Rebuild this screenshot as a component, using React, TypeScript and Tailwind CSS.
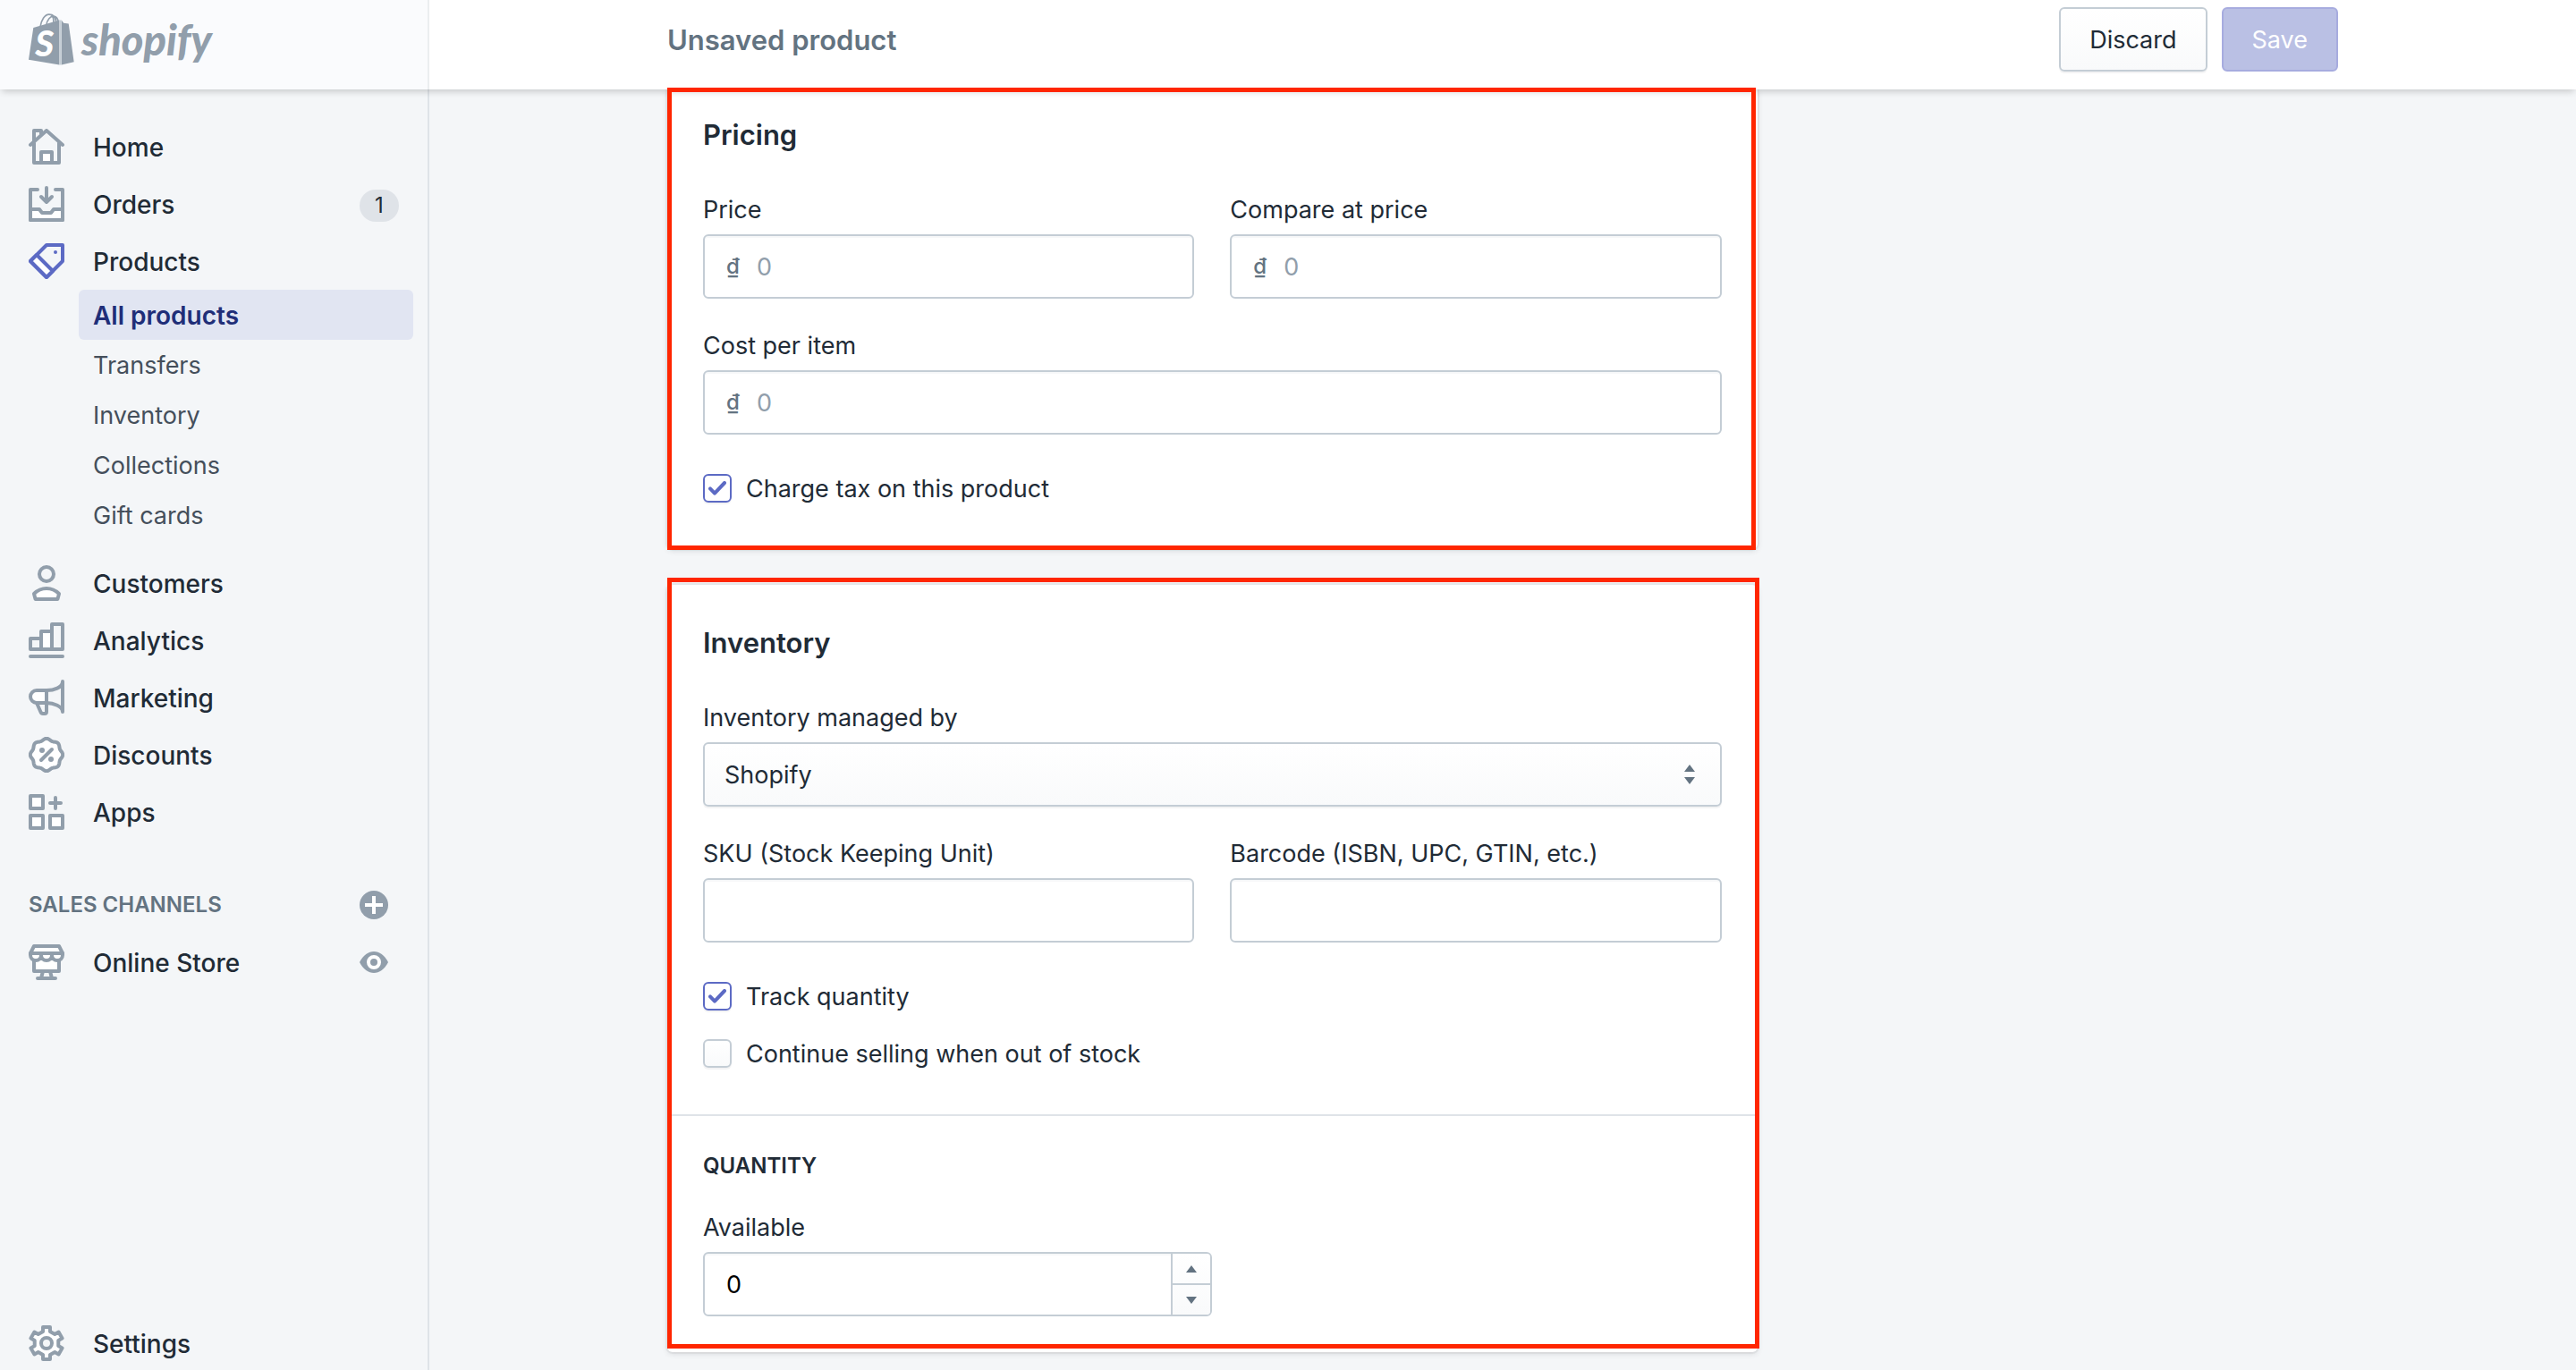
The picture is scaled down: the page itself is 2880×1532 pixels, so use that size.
import { useState } from "react";
import type { ReactNode } from "react";

type NavItem = {
    label: string;
    icon: ReactNode;
    badge?: number;
};

// Points on a circle around the middle of a 20x20 icon
const polar = (radius: number, degrees: number) => {
    const angle = (degrees * Math.PI) / 180;
    return `${(10 + radius * Math.sin(angle)).toFixed(2)},${(10 - radius * Math.cos(angle)).toFixed(2)}`;
};

const scallopPoints = Array.from({ length: 120 }, (_, i) =>
    polar(8.6 + 0.5 * Math.cos((8 * i * 3 * Math.PI) / 180), i * 3),
).join(" ");

const gearPoints = [0, 60, 120, 180, 240, 300]
    .flatMap((turn) => [
        polar(6.8, turn - 17),
        polar(9.2, turn - 12.5),
        polar(9.2, turn + 12.5),
        polar(6.8, turn + 17),
    ])
    .join(" ");

const NavIcon = ({
    children,
    active = false,
}: {
    children: ReactNode;
    active?: boolean;
}) => (
    <svg
        viewBox="0 0 20 20"
        fill="none"
        stroke="currentColor"
        strokeWidth={2}
        strokeLinecap="round"
        strokeLinejoin="round"
        aria-hidden="true"
        className={
            active
                ? "size-10 shrink-0 text-[#5c6ac4]"
                : "size-10 shrink-0 text-[#919eab]"
        }
    >
        {children}
    </svg>
);

const HomeIcon = () => (
    <NavIcon>
        <path d="M3 7V1h4v2M1 9l9-8 9 8M3 8v11h14V8" />
        <path d="M7 19v-6h6v6z" fill="#fff" />
    </NavIcon>
);

const OrdersIcon = () => (
    <NavIcon>
        <path d="M1 13h5l1.5 2h5l1.5-2h5v6H1z" fill="#fff" />
        <path d="M5 2H1v17M15 2h4v17M10 1v8M7 6l3 3 3-3" />
    </NavIcon>
);

const ProductsIcon = () => (
    <NavIcon active>
        <path d="M10 1h9v9l-9 9-9-9z" />
        <path d="M4.5 6.5l9 9L10 19l-9-9z" fill="#fff" />
        <circle cx="15" cy="5" r="1" fill="currentColor" stroke="none" />
    </NavIcon>
);

const CustomersIcon = () => (
    <NavIcon>
        <circle cx="10" cy="5" r="4" />
        <path d="M3 16c2-2 4.5-3 7-3s5 1 7 3l-.8 3H3.8z" fill="#fff" />
    </NavIcon>
);

const AnalyticsIcon = () => (
    <NavIcon>
        <path d="M1 9h6v6H1zM13 1h6v14h-6zM1 19h18" />
        <path d="M7 5h6v10H7z" fill="#fff" />
    </NavIcon>
);

const MarketingIcon = () => (
    <NavIcon>
        <path d="M4.5 13l2.2 5q.4 1 1.3 1h1q1 0 1-1v-5" />
        <path d="M10 6H4.5a3.5 3.5 0 0 0 0 7H10z" fill="#fff" />
        <path d="M10 6c4 0 9-1.5 9-5v17c0-3-5-5-9-5" />
    </NavIcon>
);

const DiscountsIcon = () => (
    <NavIcon>
        <polygon points={scallopPoints} fill="#fff" />
        <path d="M7 13l6-6" />
        <circle cx="7.5" cy="7.5" r="1.5" fill="currentColor" stroke="none" />
        <circle cx="12.5" cy="12.5" r="1.5" fill="currentColor" stroke="none" />
    </NavIcon>
);

const AppsIcon = () => (
    <NavIcon>
        <path d="M1 1h7v7H1zM1 12h7v7H1zM12 12h7v7h-7z" fill="#fff" />
        <path d="M12 5h6M15 2v6" />
    </NavIcon>
);

const StoreIcon = () => (
    <NavIcon>
        <path d="M3 8v7h14V8z" fill="#fff" />
        <path d="M8 15l-1 4M12 15l1 4M5 19h10" />
        <path d="M3 1h14l2 4v1a3 3 0 0 1-6 0 3 3 0 0 1-6 0 3 3 0 0 1-6 0V5z" fill="#fff" />
        <path d="M1 5h18" />
    </NavIcon>
);

const SettingsIcon = () => (
    <NavIcon>
        <polygon points={gearPoints} fill="#fff" />
        <circle cx="10" cy="10" r="3" fill="#f4f6f8" />
    </NavIcon>
);

const Logo = () => (
    <a href="#" className="flex items-center gap-2 text-[#919eab]">
        <svg
            viewBox="96 42 154 174"
            fill="none"
            stroke="currentColor"
            strokeWidth={5}
            aria-hidden="true"
            className="h-[58px] w-[51px]"
        >
            <path d="M135 88c4-26 16-43 30-43s22 8 24 26M155 84c3-22 15-34 26-33 9 1 14 8 15 20M172 46c8 6 9 14 8 26" />
            <path
                d="M112 90l88-26v151L96 198zM207 64l7 10 17 2 18 129-42 10z"
                fill="currentColor"
                stroke="none"
            />
            <path d="M200 64h7v151h-7z" fill="#c4cdd5" stroke="none" />
            <text
                x="118"
                y="185"
                fontSize="122"
                fill="#fff"
                stroke="none"
                className="font-['Lato'] font-black italic"
            >
                S
            </text>
        </svg>
        <span className="font-['Lato'] text-[47px] leading-[58px] font-black italic">
            shopify
        </span>
    </a>
);

const primaryNav: NavItem[] = [
    { label: "Home", icon: <HomeIcon /> },
    { label: "Orders", icon: <OrdersIcon />, badge: 1 },
    { label: "Products", icon: <ProductsIcon /> },
];

const productLinks = [
    "All products",
    "Transfers",
    "Inventory",
    "Collections",
    "Gift cards",
];

const secondaryNav: NavItem[] = [
    { label: "Customers", icon: <CustomersIcon /> },
    { label: "Analytics", icon: <AnalyticsIcon /> },
    { label: "Marketing", icon: <MarketingIcon /> },
    { label: "Discounts", icon: <DiscountsIcon /> },
    { label: "Apps", icon: <AppsIcon /> },
];

const NavLink = ({ item }: { item: NavItem }) => (
    <a
        href="#"
        className="flex h-16 items-center gap-8 pr-8 pl-8 text-[28px] font-medium"
    >
        {item.icon}
        <span className="grow pt-0.5">{item.label}</span>
        {item.badge && (
            <span className="mt-1 flex h-9 w-11 items-center justify-center rounded-full bg-[#dfe3e8] text-2xl font-normal">
                {item.badge}
            </span>
        )}
    </a>
);

const Sidebar = () => (
    <aside className="flex w-[480px] shrink-0 flex-col border-r-2 border-[#dfe3e8] pt-8">
        <nav className="flex grow flex-col">
            {primaryNav.map((item) => (
                <NavLink key={item.label} item={item} />
            ))}
            <div className="mb-4 flex flex-col pr-4 pl-22">
                {productLinks.map((label, i) => (
                    <a
                        key={label}
                        href="#"
                        className={
                            i === 0
                                ? "flex h-14 items-center rounded-md bg-[#e1e5f2] px-4 pt-0.5 text-[28px] font-semibold text-[#202e78]"
                                : "flex h-14 items-center px-4 pt-0.5 text-[#454f5b]"
                        }
                    >
                        {label}
                    </a>
                ))}
            </div>
            {secondaryNav.map((item) => (
                <NavLink key={item.label} item={item} />
            ))}
            <div className="mt-10 flex h-16 items-center justify-between pr-11 pl-8">
                <h2 className="text-2xl font-semibold text-[#637381]">
                    SALES CHANNELS
                </h2>
                <button type="button" aria-label="Add sales channel">
                    <svg viewBox="0 0 16 16" className="size-8" aria-hidden="true">
                        <circle cx="8" cy="8" r="8" fill="#919eab" />
                        <path d="M8 3v10M3 8h10" stroke="#fff" strokeWidth={2} />
                    </svg>
                </button>
            </div>
            <div className="flex items-center justify-between pr-11">
                <NavLink item={{ label: "Online Store", icon: <StoreIcon /> }} />
                <button type="button" aria-label="View your online store">
                    <svg viewBox="0 0 16 12" className="h-6 w-8" aria-hidden="true">
                        <path
                            d="M0 6c2-4 5-6 8-6s6 2 8 6c-2 4-5 6-8 6S2 10 0 6z"
                            fill="#919eab"
                        />
                        <circle cx="8" cy="6" r="3" fill="#919eab" stroke="#fff" strokeWidth={2} />
                    </svg>
                </button>
            </div>
            <div className="mt-auto flex h-15 flex-col justify-center">
                <NavLink item={{ label: "Settings", icon: <SettingsIcon /> }} />
            </div>
        </nav>
    </aside>
);

const inputStyle =
    "h-18 w-full rounded-md border-2 border-[#c4cdd5] bg-white shadow-[inset_0_2px_0_rgba(99,115,129,0.05)]";

const Field = ({
    id,
    label,
    children,
}: {
    id: string;
    label: string;
    children: ReactNode;
}) => (
    <div className="flex min-w-0 flex-1 flex-col gap-1.5">
        <label htmlFor={id} className="leading-[42px]">
            {label}
        </label>
        {children}
    </div>
);

const MoneyField = ({ id, label }: { id: string; label: string }) => (
    <Field id={id} label={label}>
        <div className="relative">
            <span className="absolute inset-y-0 left-[26px] flex items-center text-2xl font-medium text-[#637381]">
                ₫
            </span>
            <input
                id={id}
                type="text"
                placeholder="0"
                className={`${inputStyle} pr-6 pl-[58px] placeholder:text-[#919eab]`}
            />
        </div>
    </Field>
);

const TextField = ({ id, label }: { id: string; label: string }) => (
    <Field id={id} label={label}>
        <input id={id} type="text" className={`${inputStyle} px-6`} />
    </Field>
);

const Checkbox = ({
    id,
    label,
    initial = false,
}: {
    id: string;
    label: string;
    initial?: boolean;
}) => {
    const [checked, setChecked] = useState(initial);

    return (
        <div className="flex h-14 items-center gap-4">
            <span className="relative flex size-8">
                <input
                    id={id}
                    type="checkbox"
                    checked={checked}
                    onChange={(e) => setChecked(e.target.checked)}
                    className="size-8 appearance-none rounded-md border-2 border-[#c4cdd5] bg-linear-to-b from-white to-[#f9fafb] shadow-[0_2px_0_rgba(22,29,37,0.05)] checked:border-[#5c6ac4] checked:from-white checked:to-white"
                />
                {checked && (
                    <svg
                        viewBox="0 0 10 8"
                        fill="none"
                        stroke="#5c6ac4"
                        strokeWidth={2}
                        strokeLinecap="round"
                        strokeLinejoin="round"
                        aria-hidden="true"
                        className="pointer-events-none absolute inset-0 m-auto h-4 w-5"
                    >
                        <path d="M1 4.2l2.5 2.6L9 1" />
                    </svg>
                )}
            </span>
            <label htmlFor={id} className="pt-0.5">
                {label}
            </label>
        </div>
    );
};

const ArrowUp = () => (
    <svg viewBox="0 0 12 8" fill="#637381" aria-hidden="true" className="h-2 w-3">
        <path d="M0 8l6-8 6 8z" />
    </svg>
);

const ArrowDown = () => (
    <svg viewBox="0 0 12 8" fill="#637381" aria-hidden="true" className="h-2 w-3">
        <path d="M0 0l6 8 6-8z" />
    </svg>
);

const CardTitle = ({ children }: { children: ReactNode }) => (
    <h2 className="mb-[38px] text-[31px] leading-[50px] font-semibold">
        {children}
    </h2>
);

const PricingCard = () => (
    <section className="relative rounded-b-md bg-white px-10 pt-[26px] pb-10 shadow-[0_0_0_2px_rgba(63,63,68,0.05),0_2px_6px_rgba(63,63,68,0.15)]">
        <div className="pointer-events-none absolute -top-0.5 right-0.5 -bottom-px left-0 z-20 border-5 border-[#ff2600]" />
        <CardTitle>Pricing</CardTitle>
        <div className="flex flex-col gap-8">
            <div className="flex gap-10">
                <MoneyField id="price" label="Price" />
                <MoneyField id="compare-price" label="Compare at price" />
            </div>
            <MoneyField id="cost" label="Cost per item" />
            <Checkbox id="charge-tax" label="Charge tax on this product" initial />
        </div>
    </section>
);

const InventoryCard = () => {
    const [quantity, setQuantity] = useState(0);

    return (
        <section className="relative rounded-md bg-white shadow-[0_0_0_2px_rgba(63,63,68,0.05),0_2px_6px_rgba(63,63,68,0.15)]">
            <div className="pointer-events-none absolute -top-2 -right-0.5 bottom-1 left-0 z-20 border-5 border-[#ff2600]" />
            <div className="p-10">
                <CardTitle>Inventory</CardTitle>
                <div className="flex flex-col gap-8">
                    <Field id="managed-by" label="Inventory managed by">
                        <div className="relative">
                            <select
                                id="managed-by"
                                defaultValue="shopify"
                                className="h-18 w-full appearance-none rounded-md border-2 border-[#c4cdd5] bg-linear-to-b from-white to-[#f9fafb] px-[22px] pt-0.5 shadow-[0_2px_0_rgba(22,29,37,0.05)]"
                            >
                                <option value="shopify">Shopify</option>
                                <option value="none">Don't track inventory</option>
                            </select>
                            <span className="pointer-events-none absolute inset-y-0 right-[30px] flex flex-col justify-center gap-1.5">
                                <ArrowUp />
                                <ArrowDown />
                            </span>
                        </div>
                    </Field>
                    <div className="flex gap-10">
                        <TextField id="sku" label="SKU (Stock Keeping Unit)" />
                        <TextField id="barcode" label="Barcode (ISBN, UPC, GTIN, etc.)" />
                    </div>
                    <div className="flex flex-col gap-2">
                        <Checkbox id="track" label="Track quantity" initial />
                        <Checkbox id="oversell" label="Continue selling when out of stock" />
                    </div>
                </div>
            </div>
            <div className="border-t-2 border-[#dfe3e8] p-10">
                <h3 className="mb-8 text-2xl leading-8 font-semibold">QUANTITY</h3>
                <div className="flex w-1/2">
                    <Field id="available" label="Available">
                        <div className={`${inputStyle} flex overflow-hidden`}>
                            <input
                                id="available"
                                type="text"
                                inputMode="numeric"
                                value={quantity}
                                onChange={(e) => setQuantity(Number(e.target.value) || 0)}
                                className="min-w-0 grow bg-transparent px-6 pt-0.5 text-black"
                            />
                            <div className="flex w-11 shrink-0 flex-col divide-y-2 divide-[#c4cdd5] border-l-2 border-[#c4cdd5] bg-linear-to-b from-white to-[#f9fafb]">
                                <button
                                    type="button"
                                    aria-label="Increase quantity"
                                    onClick={() => setQuantity(quantity + 1)}
                                    className="flex flex-1 items-center justify-center"
                                >
                                    <ArrowUp />
                                </button>
                                <button
                                    type="button"
                                    aria-label="Decrease quantity"
                                    onClick={() => setQuantity(quantity - 1)}
                                    className="flex flex-1 items-center justify-center"
                                >
                                    <ArrowDown />
                                </button>
                            </div>
                        </div>
                    </Field>
                </div>
            </div>
        </section>
    );
};

const Header = () => (
    <header className="relative z-10 flex h-25 bg-white shadow-[0_4px_8px_-2px_rgba(0,0,0,0.2)]">
        <div className="flex w-[480px] shrink-0 items-center border-r-2 border-[#ebeef0] bg-[#fafbfd] pb-3 pl-8">
            <Logo />
        </div>
        <div className="grow pb-3">
            <div className="mx-auto flex h-full max-w-[1868px] items-center gap-4">
                <h1 className="grow pt-0.5 text-[31px] font-semibold text-[#637381]">
                    Unsaved product
                </h1>
                <button
                    type="button"
                    className="h-18 rounded-md border-2 border-[#c4cdd5] bg-linear-to-b from-white to-[#f9fafb] px-8 pt-0.5 shadow-[0_2px_0_rgba(22,29,37,0.05)]"
                >
                    Discard
                </button>
                <button
                    type="button"
                    disabled
                    className="h-18 rounded-md border-2 border-[#a7acdf] bg-[#bac0e4] px-8 pt-0.5 text-white"
                >
                    Save
                </button>
            </div>
        </div>
    </header>
);

const App = () => (
    <div className="flex min-h-screen flex-col bg-[#f4f6f8] font-['Inter',sans-serif] text-[27px] leading-10 text-[#212b36]">
        <Header />
        <div className="flex grow">
            <Sidebar />
            <main className="grow">
                <div className="mx-auto grid max-w-[1868px] grid-cols-[2fr_1fr] gap-10">
                    <div className="flex flex-col gap-10">
                        <PricingCard />
                        <InventoryCard />
                    </div>
                </div>
            </main>
        </div>
    </div>
);

export default App;
